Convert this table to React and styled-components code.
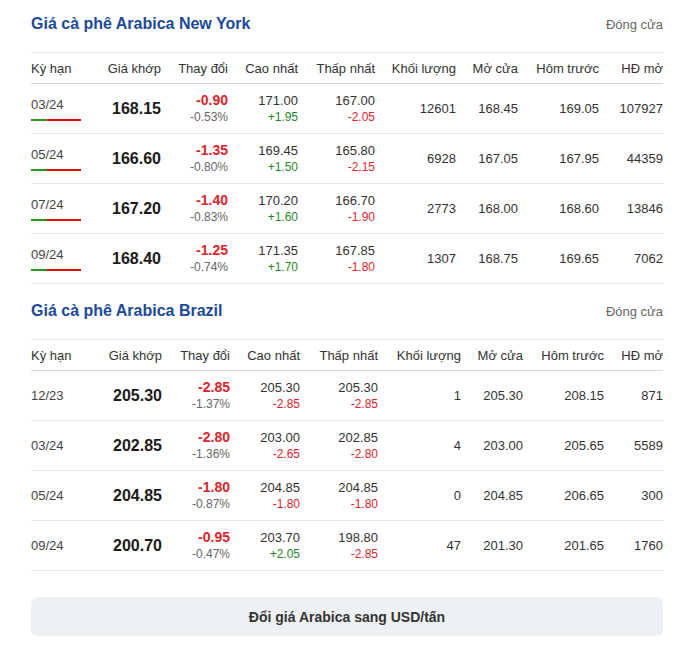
import React from "react";
import styled, { createGlobalStyle } from "styled-components";

const GlobalStyle = createGlobalStyle`
  body {
    margin: 0;
    background: #fff;
    font-family: "Liberation Sans", Arial, sans-serif;
    color: #222;
  }
`;

const Page = styled.div`
  padding: 14px 26px 20px 31px;
  display: flex;
  flex-direction: column;
`;

const Section = styled.section`
  display: flex;
  flex-direction: column;
  margin-bottom: ${(p) => p.$gap || 0}px;
`;

const TitleBar = styled.div`
  display: flex;
  justify-content: space-between;
  align-items: center;
  height: 20px;
  margin-bottom: 18px;
`;

const Title = styled.h2`
  margin: 0;
  font-size: 16px;
  font-weight: bold;
  color: #1c4a9c;
`;

const Status = styled.span`
  font-size: 13px;
  color: #666;
`;

const Row = styled.div`
  display: grid;
  grid-template-columns: ${(p) => p.$cols};
  align-items: center;
  height: ${(p) => (p.$head ? 30 : 49)}px;
  border-bottom: 1px solid ${(p) => (p.$head ? "#d3d8df" : "#e3e7ec")};
  border-top: ${(p) => (p.$first ? "1px solid #e3e7ec" : "none")};
`;

const HeadCell = styled.div`
  font-size: 13px;
  color: #333;
  text-align: ${(p) => (p.$left ? "left" : "right")};
  white-space: nowrap;
`;

const TermCell = styled.div`
  display: flex;
  flex-direction: column;
  align-items: flex-start;
  font-size: 13px;
  color: #444;
  line-height: 17px;
`;

const Bar = styled.div`
  display: flex;
  width: 50px;
  height: 2px;
  margin-top: 6px;
`;

const BarPart = styled.span`
  width: ${(p) => p.$w}px;
  background: ${(p) => p.$color};
`;

const Price = styled.div`
  text-align: right;
  font-size: 16px;
  font-weight: bold;
  color: #1a1a1a;
`;

const Stack = styled.div`
  display: flex;
  flex-direction: column;
  align-items: flex-end;
  line-height: 17px;
`;

const Change = styled.span`
  font-size: 14px;
  font-weight: bold;
  color: #e0242b;
`;

const Pct = styled.span`
  font-size: 12px;
  color: #666;
`;

const Main = styled.span`
  font-size: 13px;
  color: #333;
`;

const Sub = styled.span`
  font-size: 12px;
  color: ${(p) => (p.$up ? "#1f8a2a" : "#e0242b")};
`;

const Num = styled.div`
  text-align: right;
  font-size: 13px;
  color: #333;
`;

const Button = styled.button`
  margin-top: 26px;
  height: 39px;
  border: none;
  border-radius: 6px;
  background: #eef1f4;
  font-family: "Liberation Sans", Arial, sans-serif;
  font-size: 14px;
  font-weight: bold;
  color: #333;
  cursor: pointer;
`;

const HEADERS = [
  "Kỳ hạn",
  "Giá khớp",
  "Thay đổi",
  "Cao nhất",
  "Thấp nhất",
  "Khối lượng",
  "Mở cửa",
  "Hôm trước",
  "HĐ mở",
];

const newYork = [
  ["03/24", "168.15", "-0.90", "-0.53%", "171.00", "+1.95", "167.00", "-2.05", "12601", "168.45", "169.05", "107927"],
  ["05/24", "166.60", "-1.35", "-0.80%", "169.45", "+1.50", "165.80", "-2.15", "6928", "167.05", "167.95", "44359"],
  ["07/24", "167.20", "-1.40", "-0.83%", "170.20", "+1.60", "166.70", "-1.90", "2773", "168.00", "168.60", "13846"],
  ["09/24", "168.40", "-1.25", "-0.74%", "171.35", "+1.70", "167.85", "-1.80", "1307", "168.75", "169.65", "7062"],
];

const brazil = [
  ["12/23", "205.30", "-2.85", "-1.37%", "205.30", "-2.85", "205.30", "-2.85", "1", "205.30", "208.15", "871"],
  ["03/24", "202.85", "-2.80", "-1.36%", "203.00", "-2.65", "202.85", "-2.80", "4", "203.00", "205.65", "5589"],
  ["05/24", "204.85", "-1.80", "-0.87%", "204.85", "-1.80", "204.85", "-1.80", "0", "204.85", "206.65", "300"],
  ["09/24", "200.70", "-0.95", "-0.47%", "203.70", "+2.05", "198.80", "-2.85", "47", "201.30", "201.65", "1760"],
];

function PriceTable({ title, rows, cols, bars, gap }) {
  return (
    <Section $gap={gap}>
      <TitleBar>
        <Title>{title}</Title>
        <Status>Đóng cửa</Status>
      </TitleBar>
      <Row $cols={cols} $head $first>
        {HEADERS.map((h, i) => (
          <HeadCell key={h} $left={i === 0}>
            {h}
          </HeadCell>
        ))}
      </Row>
      {rows.map((r) => (
        <Row key={r[0]} $cols={cols}>
          <TermCell>
            {r[0]}
            {bars && (
              <Bar>
                <BarPart $w={16} $color="#2a9a1a" />
                <BarPart $w={34} $color="#e30d0d" />
              </Bar>
            )}
          </TermCell>
          <Price>{r[1]}</Price>
          <Stack>
            <Change>{r[2]}</Change>
            <Pct>{r[3]}</Pct>
          </Stack>
          <Stack>
            <Main>{r[4]}</Main>
            <Sub $up={r[5].startsWith("+")}>{r[5]}</Sub>
          </Stack>
          <Stack>
            <Main>{r[6]}</Main>
            <Sub $up={r[7].startsWith("+")}>{r[7]}</Sub>
          </Stack>
          <Num>{r[8]}</Num>
          <Num>{r[9]}</Num>
          <Num>{r[10]}</Num>
          <Num>{r[11]}</Num>
        </Row>
      ))}
    </Section>
  );
}

export default function App() {
  return (
    <>
      <GlobalStyle />
      <Page>
        <PriceTable
          title="Giá cà phê Arabica New York"
          rows={newYork}
          cols="60px 70px 67px 70px 77px 81px 62px 81px 64px"
          bars
          gap={17}
        />
        <PriceTable
          title="Giá cà phê Arabica Brazil"
          rows={brazil}
          cols="60px 71px 68px 70px 78px 83px 62px 81px 59px"
        />
        <Button>Đổi giá Arabica sang USD/tấn</Button>
      </Page>
    </>
  );
}
